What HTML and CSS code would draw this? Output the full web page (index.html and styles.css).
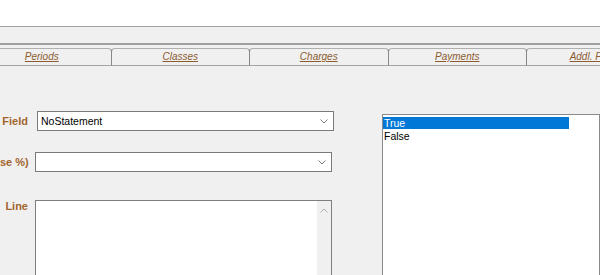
FILE: index.html
```html
<!DOCTYPE HTML>
<html>
<head>
	<meta http-equiv="Content-Type" content="text/html; charset=utf-8">
	<title>Statement Setup</title>
	<link rel="stylesheet" href="styles.css">
</head>
<body>
<div class="header"></div>
<div class="toolbar"></div>

<div class="tabs">
	<a class="tab" href="#">Periods</a>
	<a class="tab" href="#">Classes</a>
	<a class="tab" href="#">Charges</a>
	<a class="tab" href="#">Payments</a>
	<a class="tab" href="#">Addl. Fields</a>
</div>

<div class="main">
	<div class="form">
		<div class="row first">
			<div class="label">Field</div>
			<div class="select wide">
				<span>NoStatement</span>
				<svg class="chev" width="8" height="5" viewBox="0 0 8 5"><polyline points="0.5,0.5 4,4 7.5,0.5" fill="none" stroke="#7a7a7a" stroke-width="1"/></svg>
			</div>
		</div>
		<div class="row second">
			<div class="label">se %)</div>
			<div class="select">
				<span></span>
				<svg class="chev" width="8" height="5" viewBox="0 0 8 5"><polyline points="0.5,0.5 4,4 7.5,0.5" fill="none" stroke="#7a7a7a" stroke-width="1"/></svg>
			</div>
		</div>
		<div class="row third">
			<div class="label">Line</div>
			<div class="memo">
				<div class="memo-text"></div>
				<div class="scroll">
					<svg width="8" height="5" viewBox="0 0 8 5"><polyline points="0.5,4.5 4,1 7.5,4.5" fill="none" stroke="#b0b0b0" stroke-width="1"/></svg>
				</div>
			</div>
		</div>
	</div>

	<div class="listbox">
		<div class="item selected">True</div>
		<div class="item">False</div>
	</div>
</div>
</body>
</html>
```

FILE: styles.css
```css
*{
	margin: 0;
	padding: 0;
	box-sizing: border-box;
}
body{
	width: 600px;
	height: 275px;
	overflow: hidden;
	background: #f0f0f0;
	font-family: "Liberation Sans", Arial, sans-serif;
	font-size: 11px;
	color: #000;
}

.header{
	height: 27px;
	background: #fff;
	border-bottom: 1px solid #a3a3a3;
}
.toolbar{
	height: 18px;
	border-bottom: 2px solid #a0a0a0;
}

.tabs{
	display: flex;
	margin-top: 3px;
	margin-left: -28px;
	height: 18px;
}
.tab{
	flex: 0 0 139.5px;
	margin-right: -1px;
	height: 18px;
	border: 1px solid #878787;
	border-top-color: #b0b0b0;
	border-bottom-color: #a3a3a3;
	border-radius: 4px 4px 0 0;
	text-align: center;
	line-height: 16px;
	font-size: 10px;
	font-style: italic;
	color: #8c5c30;
	text-decoration: underline;
}

.main{
	display: flex;
}
.form{
	width: 335px;
	padding-top: 45px;
}
.row{
	display: flex;
	align-items: center;
}
.row.second{
	margin-top: 21px;
}
.row.third{
	margin-top: 28px;
	align-items: flex-start;
}
.label{
	width: 28px;
	text-align: right;
	white-space: nowrap;
	font-weight: bold;
	color: #a3652d;
	line-height: 13px;
}

.select{
	display: flex;
	align-items: center;
	justify-content: space-between;
	width: 297px;
	height: 20px;
	margin-left: 7px;
	padding: 0 5px 0 3px;
	background: #fff;
	border: 1px solid #7a7a7a;
	font-size: 10.5px;
}
.select.wide{
	margin-left: 9px;
}

.memo{
	display: flex;
	width: 297px;
	height: 110px;
	margin-left: 7px;
	background: #fff;
	border: 1px solid #7f7f7f;
}
.memo-text{
	flex: 1;
}
.scroll{
	width: 14px;
	background: #f0f0f0;
	display: flex;
	justify-content: center;
	padding-top: 7px;
}

.listbox{
	width: 240px;
	height: 200px;
	margin-left: 48px;
	margin-top: 48px;
	padding: 1px 0 0 0;
	background: #fff;
	border: 1px solid #8a8a8a;
}
.item{
	width: 186px;
	height: 12px;
	line-height: 12px;
	padding-left: 1px;
	font-size: 10.5px;
}
.item.selected{
	margin-top: 1px;
	margin-bottom: 1px;
	background: #0078d7;
	color: #fff;
}
```
